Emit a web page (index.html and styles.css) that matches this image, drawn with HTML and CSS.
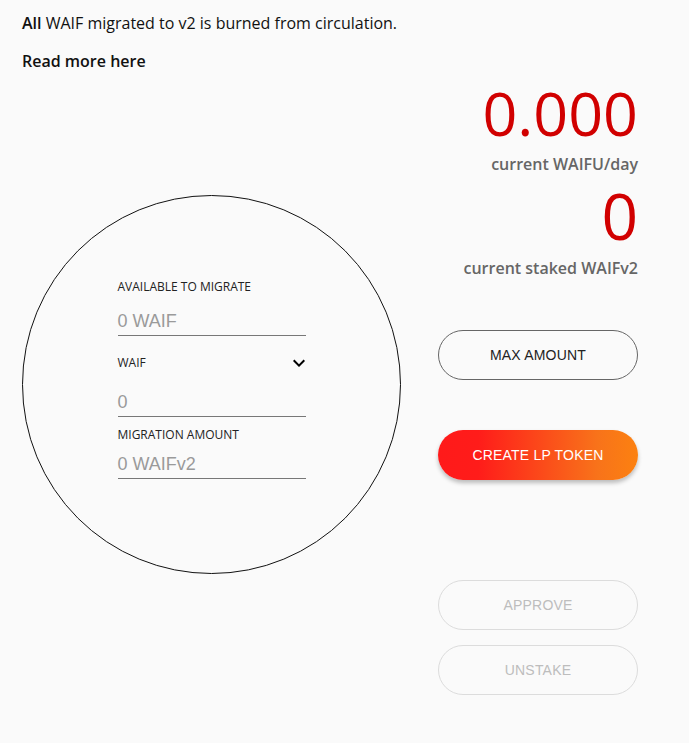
FILE: index.html
```html
<!DOCTYPE html>
<html lang="en">
<head>
<meta charset="utf-8">
<title>Migrate</title>
<link rel="stylesheet" href="styles.css">
</head>
<body>
<div class="page">
  <p class="intro"><strong>All</strong> WAIF migrated to v2 is burned from circulation.</p>
  <p class="more">Read more here</p>
  <div class="main">
    <div class="circle">
      <div class="form">
        <div class="label">AVAILABLE TO MIGRATE</div>
        <div class="field f1">0 WAIF</div>
        <div class="select">
          <span class="label">WAIF</span>
          <svg class="chev" width="24" height="24" viewBox="0 0 24 24"><path d="M16.59 8.59L12 13.17 7.41 8.59 6 10l6 6 6-6z" fill="#000"/></svg>
        </div>
        <div class="field f2">0</div>
        <div class="label l3">MIGRATION AMOUNT</div>
        <div class="field f3">0 WAIFv2</div>
      </div>
    </div>
    <div class="side">
      <div class="big b1">0.000</div>
      <div class="cap c1">current WAIFU/day</div>
      <div class="big b2">0</div>
      <div class="cap c2">current staked WAIFv2</div>
      <button class="btn outline">MAX AMOUNT</button>
      <button class="btn primary">CREATE LP TOKEN</button>
      <button class="btn disabled d1">APPROVE</button>
      <button class="btn disabled d2">UNSTAKE</button>
    </div>
  </div>
</div>
</body>
</html>
```

FILE: styles.css
```css
html, body {
  margin: 0;
  padding: 0;
  background: #fafafa;
}
body {
  font-family: "Open Sans", "Liberation Sans", sans-serif;
  color: #111;
}
.page {
  padding: 12px 22px 0 22px;
}
.intro, .more {
  margin: 0;
  font-size: 16px;
  line-height: 22px;
}
.intro strong {
  font-weight: 600;
}
.more {
  margin-top: 16px;
  font-weight: 600;
}
.main {
  display: flex;
  align-items: flex-start;
  gap: 37px;
}
.circle {
  margin-top: 123px;
  width: 379px;
  height: 379px;
  box-sizing: border-box;
  border: 1px solid #111;
  border-radius: 50%;
  display: flex;
  justify-content: center;
  align-items: flex-start;
  padding-top: 83px;
}
.form {
  width: 188px;
  display: flex;
  flex-direction: column;
}
.label {
  font-size: 12px;
  line-height: 16px;
  color: #222;
}
.field {
  font-family: "Liberation Sans", Arial, sans-serif;
  font-size: 18px;
  line-height: 24px;
  color: #9a9a9a;
  padding-bottom: 2px;
  border-bottom: 1px solid #777;
}
.f1 { margin-top: 14px; }
.select {
  margin-top: 19px;
  height: 16px;
  display: flex;
  justify-content: space-between;
  align-items: center;
}
.chev {
  margin-right: -5px;
}
.f2 { margin-top: 19px; }
.l3 { margin-top: 10px; }
.f3 { margin-top: 9px; }
.side {
  width: 200px;
  display: flex;
  flex-direction: column;
  align-items: stretch;
}
.big {
  text-align: right;
  color: #d10000;
  font-weight: 400;
}
.b1 {
  margin-top: 10px;
  font-size: 61px;
  line-height: 61px;
}
.b2 {
  margin-top: 9px;
  font-size: 64px;
  line-height: 64px;
}
.cap {
  text-align: right;
  font-size: 16px;
  line-height: 22px;
  font-weight: 600;
  color: #666;
}
.c1 { margin-top: 10px; }
.c2 { margin-top: 9px; }
.btn {
  height: 50px;
  border-radius: 25px;
  font-family: "Liberation Sans", Arial, sans-serif;
  font-size: 14px;
  letter-spacing: 0.2px;
  padding: 0;
  background: transparent;
  cursor: pointer;
}
.outline {
  margin-top: 51px;
  border: 1px solid #666;
  color: #222;
}
.primary {
  margin-top: 50px;
  border: none;
  color: #fff;
  background: linear-gradient(to right, #ff1a1a 0%, #ff1c1a 20%, #f8731a 80%, #fc8110 100%);
  box-shadow: 0 3px 4px rgba(0, 0, 0, 0.25);
}
.disabled {
  border: 1px solid #dcdcdc;
  color: #bdbdbd;
}
.d1 { margin-top: 100px; }
.d2 { margin-top: 15px; }
```
